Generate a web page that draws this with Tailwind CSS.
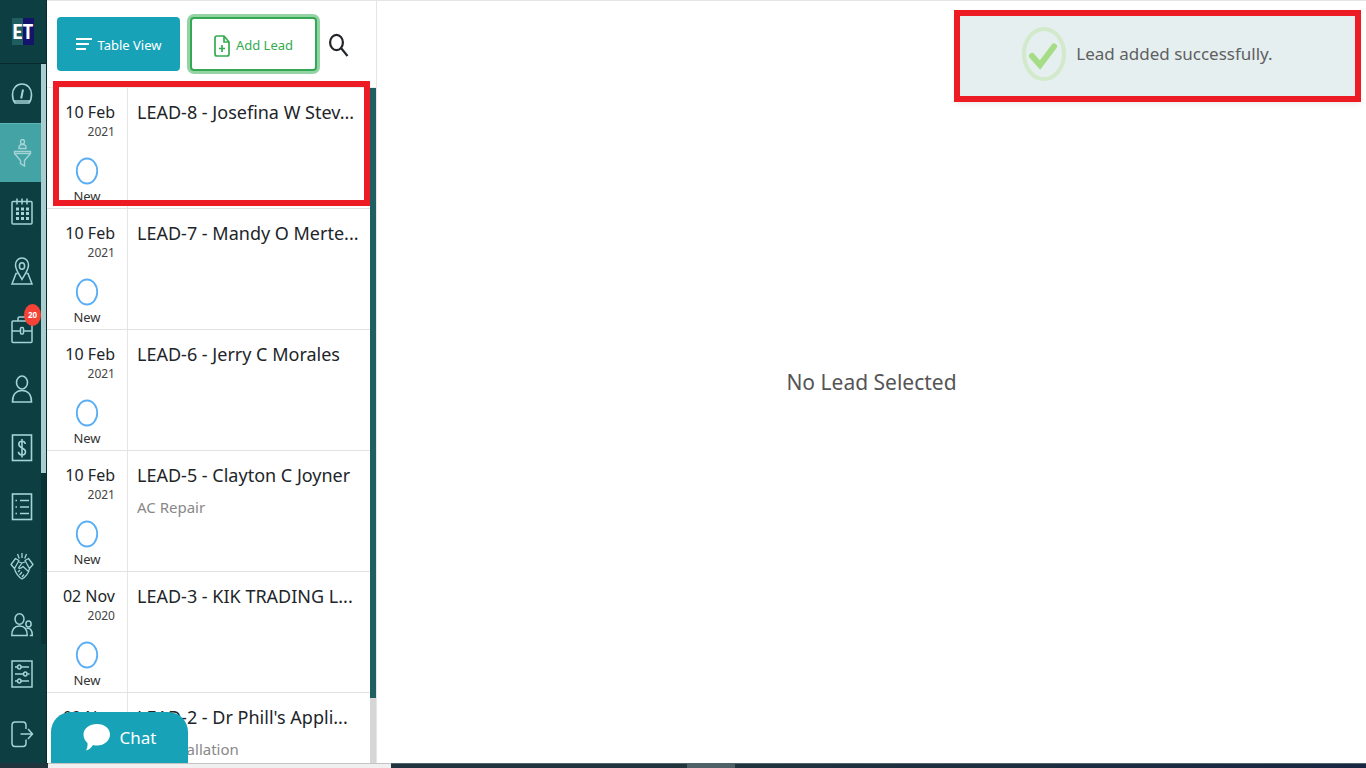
<!DOCTYPE html>
<html lang="en">
<head>
  <meta charset="UTF-8" />
  <meta name="viewport" content="width=device-width, initial-scale=1.0" />
  <title>Leads</title>
  <script src="https://cdn.jsdelivr.net/npm/@tailwindcss/browser@4"></script>
</head>
<body class="h-screen flex flex-col overflow-hidden bg-white text-[#212529] font-['Noto_Sans','Open_Sans',sans-serif]">

  <div class="flex-1 min-h-0 flex">

    <!-- Sidebar -->
    <aside class="w-[47px] shrink-0 flex flex-col bg-[#0d3f42] border-r border-[#062c2f] text-[#a5d3d6]">
      <a href="#" aria-label="Home" class="h-16 shrink-0 flex items-center pl-3 border-b border-[#08292b]">
        <span class="w-[22px] h-[27px] flex items-center justify-center bg-linear-to-r from-[#1f5e60] from-50% to-[#14146c] to-50% text-white text-xl font-bold font-['Liberation_Sans_Narrow','Roboto_Condensed','Noto_Sans',sans-serif]">ET</span>
      </a>

      <div class="flex-1 min-h-0 flex">
        <nav class="flex-1 overflow-hidden">
          <a href="#" aria-label="Dashboard" class="h-[59px] flex items-center pl-2.5">
            <svg class="w-6 h-7" viewBox="0 0 24 28" fill="none" stroke="currentColor" stroke-width="1.6">
              <path d="M5 23C3 20.500 2.500 17.500 2.500 14.500C2.500 8.500 6.500 4 12 4s9.500 4.500 9.500 10.500c0 3-.5 6-2.500 8.500zM4 21h16"/>
              <path d="M11.200 18.500L13 9.500" stroke-width="2"/>
            </svg>
          </a>
          <a href="#" aria-label="Leads" class="h-[59px] flex items-center pl-2.5 bg-[#43a3a5] border-t border-[#5eb5b6]">
            <svg class="w-6 h-7" viewBox="0 0 24 28" fill="none" stroke="currentColor" stroke-width="1.4">
              <ellipse cx="12.500" cy="2.700" rx="2" ry="2.200"/>
              <path d="M9 9.500V8.500c0-2 1.500-3 3.500-3s3.500 1 3.500 3v1z"/>
              <path d="M4.500 12.500h16v2l-6 7V27l-4-2.500v-3l-6-7z"/>
              <path d="M4.500 14.500h16"/>
            </svg>
          </a>
          <a href="#" aria-label="Calendar" class="h-[59px] flex items-center pl-2.5">
            <svg class="w-6 h-7" viewBox="0 0 24 28" fill="none" stroke="currentColor" stroke-width="1.500">
              <rect x="2" y="3.500" width="20" height="22.500" rx="1"/>
              <path d="M7 .5v6M12 .5v6M17 .5v6"/>
              <path d="M6 11h3m2 0h3m2 0h3M6 15.500h3m2 0h3m2 0h3M6 20.500h3m2 0h3m2 0h3" stroke-width="2.800"/>
            </svg>
          </a>
          <a href="#" aria-label="Map" class="h-[59px] flex items-center pl-2.5">
            <svg class="w-6 h-7" viewBox="0 0 24 28" fill="none" stroke="currentColor" stroke-width="1.500">
              <path d="M12 22.500C9 17 5.500 12.500 5.500 8.200C5.500 4 8.300 1 12 1s6.500 3 6.500 7.200C18.500 12.500 15 17 12 22.500z"/>
              <ellipse cx="12" cy="9" rx="2.600" ry="3.300"/>
              <path d="M7.500 16.500H6L2 27h20l-4-10.500h-1.500"/>
            </svg>
          </a>
          <a href="#" aria-label="Jobs, 20 new" class="relative h-[59px] flex items-center pl-2.5">
            <svg class="w-6 h-7" viewBox="0 0 24 28" fill="none" stroke="currentColor" stroke-width="1.500">
              <rect x="2" y="5" width="20" height="21.500" rx="1"/>
              <path d="M8 5V2.500C8 1.500 8.500 1 9.500 1h5c1 0 1.500.5 1.500 1.500V5M2 15h8M14 15h8"/>
              <rect x="10.500" y="11.500" width="3" height="6.500" rx="1"/>
            </svg>
            <span class="absolute right-0 top-1 w-[17px] h-[22px] flex items-center justify-center rounded-[50%] bg-[#f44336] text-white text-[8px] leading-none font-bold">20</span>
          </a>
          <a href="#" aria-label="Customers" class="h-[59px] flex items-center pl-2.5">
            <svg class="w-6 h-7" viewBox="0 0 24 28" fill="none" stroke="currentColor" stroke-width="1.600">
              <ellipse cx="12" cy="7.500" rx="5.500" ry="6.500"/>
              <path d="M2.500 27c0-7 3.500-11.500 9.500-11.500s9.500 4.500 9.500 11.500z"/>
            </svg>
          </a>
          <a href="#" aria-label="Invoices" class="h-[59px] flex items-center pl-2.5">
            <svg class="w-6 h-7" viewBox="0 0 24 28" fill="none" stroke="currentColor" stroke-width="1.600">
              <rect x="2.500" y="1" width="19" height="25.500"/>
              <path d="M15.300 10c-.3-2-1.500-2.800-3.300-2.800S8.800 8.300 8.800 10.300c0 4.500 6.700 3 6.700 7.500 0 2-1.500 3.200-3.500 3.200s-3.400-1-3.600-3.200M12 5v18.500"/>
            </svg>
          </a>
          <a href="#" aria-label="Reports" class="h-[59px] flex items-center pl-2.5">
            <svg class="w-6 h-7" viewBox="0 0 24 28" fill="none" stroke="currentColor" stroke-width="1.600">
              <rect x="2.500" y="1" width="19" height="25.500"/>
              <path d="M5.500 7.500h1.500M10 7.500h9M5.500 14h1.500M10 14h9M5.500 20.500h1.500M10 20.500h9"/>
            </svg>
          </a>
          <a href="#" aria-label="Partners" class="h-[59px] flex items-center pl-2.5">
            <svg class="w-6 h-7" viewBox="0 0 24 28" fill="none" stroke="currentColor" stroke-width="1.300" stroke-linejoin="round">
              <path d="M12 1v5M7.500 2l1.800 4.500M16.500 2l-1.800 4.500"/>
              <path d="M5.500 6.500l3.500 2-4.500 8-3.500-4zM18.500 6.500L15 8.500l4.500 8 3.500-4z"/>
              <path d="M9 10l3 1 3-1M12 11l-3.500 5c2 1 3.500-.5 4.500-1.500l5.500 5M4.500 16.500c.5 4 5 9.500 7.500 10.500 2.500-1 7-6 7.500-10.500M8 20l2-2M9.500 23l2.500-3M12 25l2-2.500"/>
            </svg>
          </a>
          <a href="#" aria-label="Team" class="h-[59px] flex items-center pl-2.5">
            <svg class="w-6 h-7" viewBox="0 0 24 28" fill="none" stroke="currentColor" stroke-width="1.500">
              <ellipse cx="9.500" cy="8" rx="4.500" ry="5.300"/>
              <path d="M1.800 24.500c0-6 3-9.500 7.700-9.500s7.700 3.500 7.700 9.500z"/>
              <ellipse cx="18.500" cy="13" rx="2.600" ry="3"/>
              <path d="M16.500 17.500c3.500-1 5.800 1.500 5.800 7h-2.500"/>
            </svg>
          </a>
        </nav>
        <div class="w-[5px] bg-[#0a3335]">
          <div class="h-[409px] bg-[#aacdd0]"></div>
        </div>
      </div>

      <a href="#" aria-label="Settings" class="h-[60px] shrink-0 flex items-center pl-2.5">
        <svg class="w-6 h-7" viewBox="0 0 24 28" fill="none" stroke="currentColor" stroke-width="1.500">
          <rect x="2" y="1" width="20" height="26"/>
          <path d="M5 7h3M11 7h8M5 14h8M17.500 14h2M5 21h3M11 21h8"/>
          <ellipse cx="9.300" cy="7" rx="1.700" ry="2"/>
          <ellipse cx="15.300" cy="14" rx="1.700" ry="2"/>
          <ellipse cx="9.300" cy="21" rx="1.700" ry="2"/>
        </svg>
      </a>
      <a href="#" aria-label="Log out" class="h-[59px] shrink-0 flex items-center pl-2.5">
        <svg class="w-6 h-7" viewBox="0 0 24 28" fill="none" stroke="currentColor" stroke-width="1.500">
          <path d="M16 9V5.500c0-2-1-3.500-3-3.500H5C3 2 2 3.500 2 5.500V23c0 2 1 3.500 3 3.500h8c2 0 3-1.500 3-3.500v-3.500"/>
          <path d="M10.500 14h12M18 9l4.500 5-4.500 5"/>
        </svg>
      </a>
    </aside>

    <!-- Lead list -->
    <section class="relative w-[330px] shrink-0 flex flex-col border-t border-r border-[#e5e5e8]">
      <div class="h-[87px] shrink-0 flex items-start pt-4 pl-2.5 border-b border-[#ececec]">
        <button type="button" class="w-[123px] h-[54px] flex items-center justify-center gap-1.5 rounded bg-[#18a2b8] pt-1 text-white text-[13px]">
          <svg class="w-4 h-3.5 mb-1" viewBox="0 0 16 14" fill="none" stroke="currentColor" stroke-width="2.200"><path d="M0 2h16M0 7h13M0 12h10"/></svg>
          Table View
        </button>
        <button type="button" class="ml-2.5 w-[127px] h-[54px] flex items-center justify-center gap-1.5 rounded border-2 border-[#34a853] ring-3 ring-[#94d4a4] bg-white pt-1 text-[#34ab50] text-[13px]">
          <svg class="w-4 h-[22px]" viewBox="0 0 16 22" fill="none" stroke="currentColor" stroke-width="1.700" stroke-linejoin="round">
            <path d="M10 1H3C1.800 1 1 2 1 3v16c0 1 .8 2 2 2h10c1.200 0 2-1 2-2V7z"/>
            <path d="M10 1v6h5M8 10v7M5 13.500h6"/>
          </svg>
          Add Lead
        </button>
        <button type="button" aria-label="Search" class="ml-3 mt-4 w-5 h-6">
          <svg class="w-5 h-6" viewBox="0 0 20 24" fill="none" stroke="#212529" stroke-width="2.200"><ellipse cx="7.500" cy="9.500" rx="6.400" ry="7.600"/><path d="M12 15l6.500 8"/></svg>
        </button>
      </div>

      <div class="flex-1 min-h-0 flex">
        <ul id="leadList" class="flex-1 min-w-0 overflow-hidden"></ul>
        <div class="w-1.5 bg-[#d6d6d6]">
          <div class="h-[610px] bg-[#1f5f61]"></div>
        </div>
      </div>

      <div class="absolute left-1.5 right-1.5 top-20 h-[125px] border-6 border-[#ed1c24] pointer-events-none"></div>

      <button type="button" class="absolute left-1 bottom-0 w-[137px] h-[51px] flex items-center justify-center gap-2.5 rounded-t-[20px] bg-[#18a2b8] text-white text-[17px]">
        <svg class="w-[27px] h-7" viewBox="0 0 27 28" fill="currentColor"><path d="M14 0c7.500 0 13 4.500 13 10.500S21.500 21.500 14 21.500c-1.500 0-2.500-.2-4-.6-1.500 2.500-4 4.800-7 5.600 1.200-2 1.800-5 1.500-7.500C2 17 .5 14 .5 10.500.5 4.500 6.500 0 14 0z"/></svg>
        Chat
      </button>
    </section>

    <!-- Lead detail -->
    <main class="relative flex-1 min-w-0 flex items-center justify-center border-t border-[#e5e5e8]">
      <p class="text-[21px] leading-7 text-[#555]">No Lead Selected</p>

      <div role="status" class="absolute right-[5px] top-[9px] w-[407px] h-[92px] flex items-center justify-center gap-2.5 border-6 border-[#ed1c24] bg-[#e6eff0] pr-5 pb-1 text-[17px] text-[#606060] shadow-md/5">
        <svg class="w-11 h-[54px]" viewBox="0 0 44 54" fill="none">
          <ellipse cx="22" cy="27" rx="20" ry="25" stroke="#d2eacb" stroke-width="4"/>
          <path d="M10 29l8 9L32 19.500" stroke="#a5dc86" stroke-width="6" stroke-linecap="round"/>
        </svg>
        Lead added successfully.
      </div>
    </main>
  </div>

  <!-- Bottom bar -->
  <footer class="h-[5px] shrink-0 flex bg-linear-to-r from-[#20343d] from-50% to-[#192642]">
    <div class="ml-12 w-[343px] bg-[#f0f0f0] border-t border-[#c4c4c4]"></div>
    <div class="flex-1 flex border-t border-[#52646c]">
      <div class="ml-74 w-12 bg-[#4f6167]"></div>
    </div>
  </footer>

  <script>
    const leads = [
      { day: "10 Feb", year: 2021, title: "LEAD-8 - Josefina W Stev...", note: "", status: "New" },
      { day: "10 Feb", year: 2021, title: "LEAD-7 - Mandy O Merte...", note: "", status: "New" },
      { day: "10 Feb", year: 2021, title: "LEAD-6 - Jerry C Morales", note: "", status: "New" },
      { day: "10 Feb", year: 2021, title: "LEAD-5 - Clayton C Joyner", note: "AC Repair", status: "New" },
      { day: "02 Nov", year: 2020, title: "LEAD-3 - KIK TRADING L...", note: "", status: "New" },
      { day: "02 Nov", year: 2020, title: "LEAD-2 - Dr Phill's Appli...", note: "AC Installation", status: "" },
    ];

    const leadList = document.getElementById("leadList");
    for (const lead of leads) {
      const li = document.createElement("li");
      li.className = "h-[121px] flex border-b border-[#e2e2e2]";
      li.innerHTML = `
        <div class="w-[81px] shrink-0 flex flex-col pt-3 border-r border-[#e6e6e6]">
          <span class="pr-3 text-right text-base leading-6">${lead.day}</span>
          <span class="pr-3 text-right text-xs leading-4 text-[#444]">${lead.year}</span>
          <svg class="self-center mt-[17px] w-6 h-7" viewBox="0 0 24 28" fill="none" stroke="#5aaef5" stroke-width="1.800"><ellipse cx="12" cy="14" rx="10.200" ry="12.500"/></svg>
          <span class="mt-[3px] text-center text-[13px] leading-4 text-[#333]">${lead.status}</span>
        </div>
        <div class="flex-1 min-w-0 pt-3 pl-[9px]">
          <a href="#" class="block text-lg leading-6 whitespace-nowrap">${lead.title}</a>
          <p class="mt-2 text-[15px] leading-6 text-[#888]">${lead.note}</p>
        </div>`;
      leadList.appendChild(li);
    }
  </script>
</body>
</html>
